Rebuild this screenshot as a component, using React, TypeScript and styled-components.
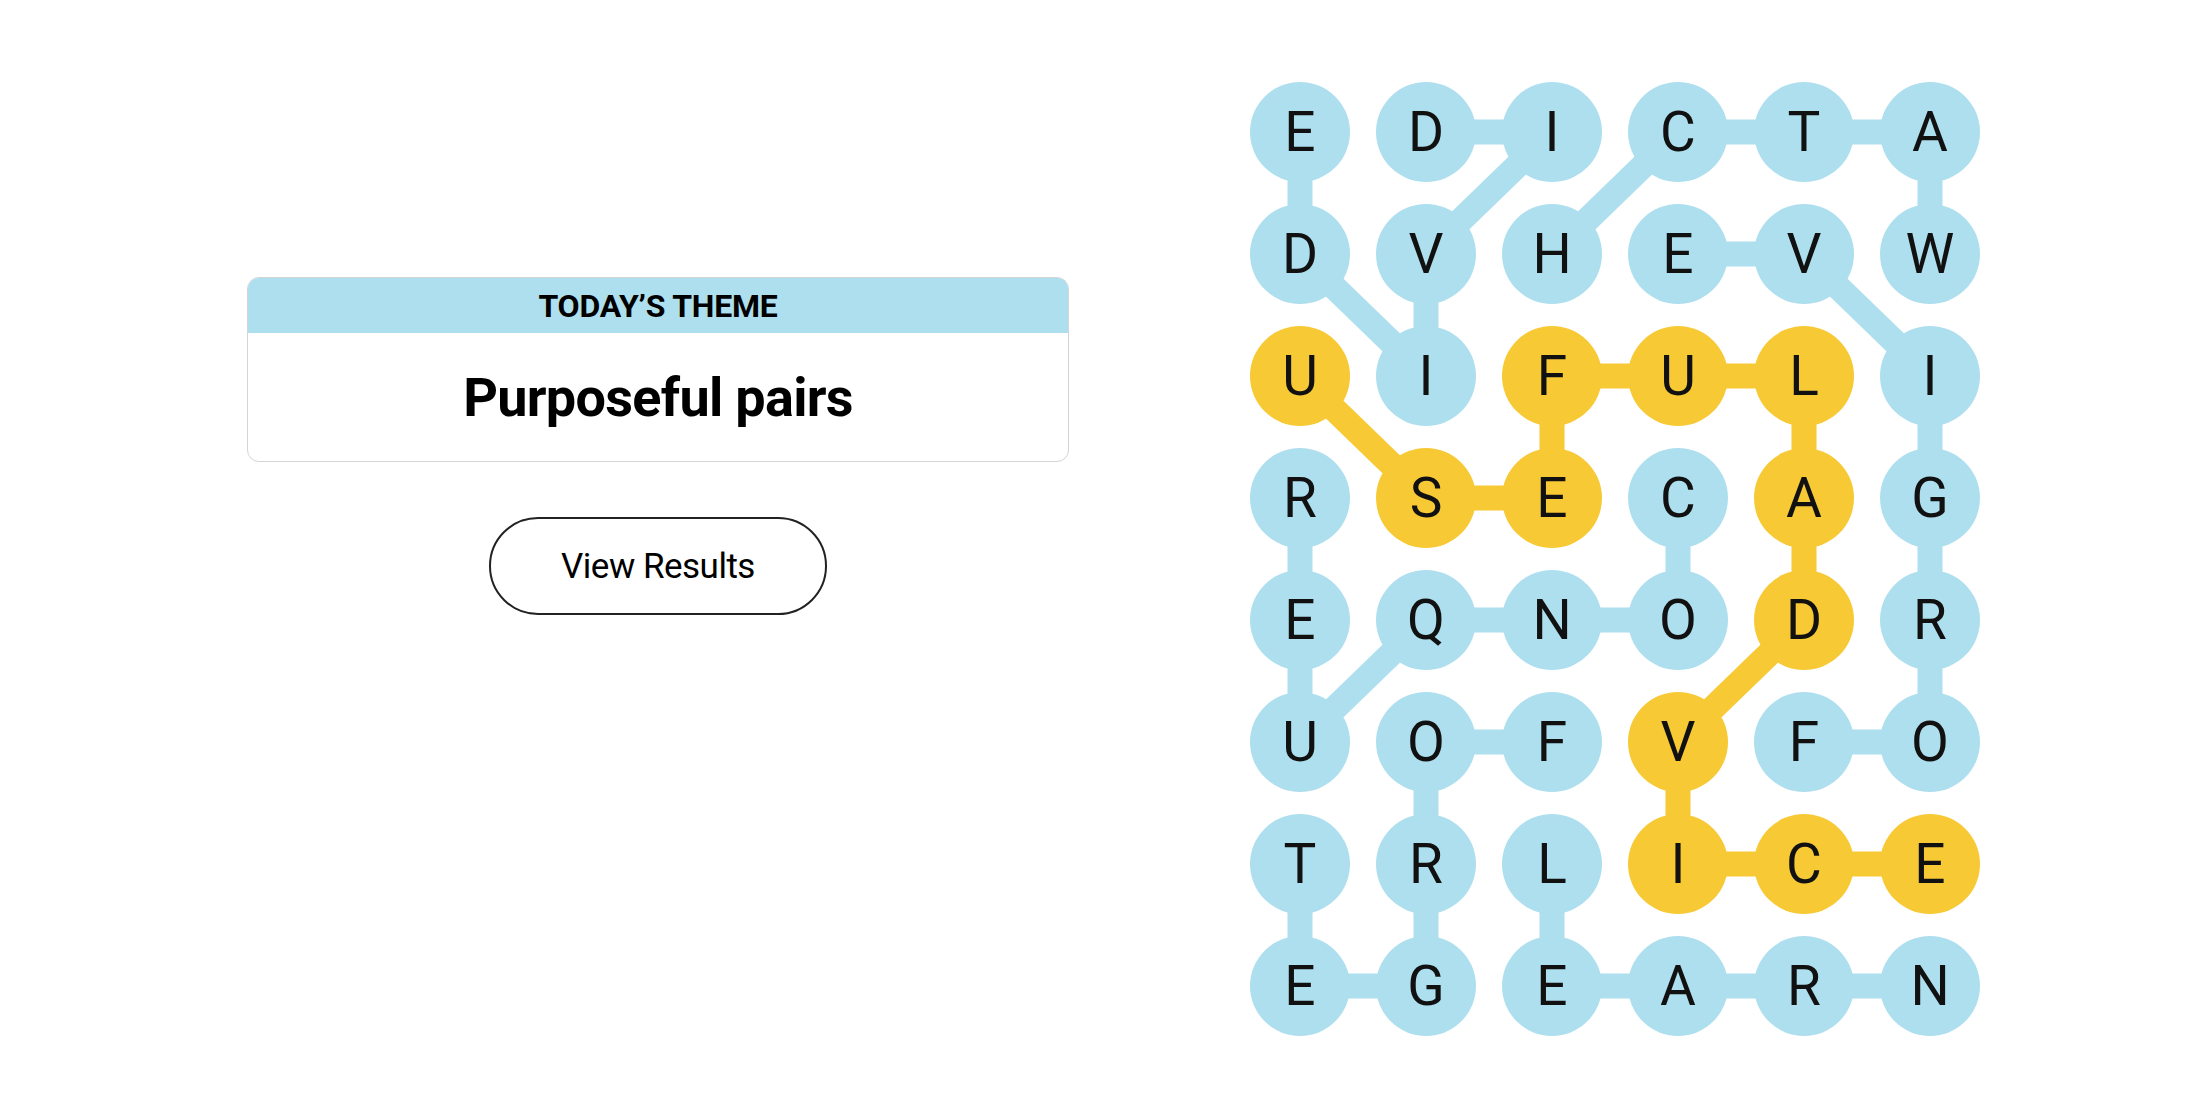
import React from 'react'
import styled, { createGlobalStyle } from 'styled-components'

const BLUE = '#aedfee'
const YELLOW = '#f7c935'
const CELL = 100
const COL_STEP = 126
const ROW_STEP = 122

const GlobalStyle = createGlobalStyle`
  body {
    margin: 0;
    background: #ffffff;
    font-family: Roboto, "Liberation Sans", sans-serif;
    color: #000;
  }
`

const Page = styled.div`
  display: flex;
  flex-direction: row;
  align-items: flex-start;
  gap: 181px;
  padding: 82px 0 0 247px;
  height: 1100px;
  box-sizing: border-box;
`

const SidePanel = styled.div`
  display: flex;
  flex-direction: column;
  align-items: center;
  gap: 55px;
  margin-top: 195px;
  width: 822px;
`

const ThemeCard = styled.div`
  width: 100%;
  border: 1.5px solid #d4d4d4;
  border-radius: 12px;
  overflow: hidden;
  box-sizing: border-box;
`

const ThemeHeader = styled.div`
  height: 55px;
  background: ${BLUE};
  display: flex;
  align-items: center;
  justify-content: center;
  font-weight: 700;
  font-size: 32px;
  letter-spacing: -0.2px;
`

const ThemeTitle = styled.div`
  height: 128px;
  display: flex;
  align-items: center;
  justify-content: center;
  font-weight: 700;
  font-size: 54px;
  letter-spacing: -0.7px;
`

const ResultsButton = styled.button`
  width: 338px;
  height: 98px;
  border: 2px solid #222;
  border-radius: 49px;
  background: #fff;
  font-family: Roboto, "Liberation Sans", sans-serif;
  font-size: 35px;
  color: #000;
  letter-spacing: -0.5px;
  cursor: pointer;
`

const Board = styled.div`
  position: relative;
  width: ${CELL * 6 + (COL_STEP - CELL) * 5}px;
`

const Links = styled.svg`
  position: absolute;
  left: 0;
  top: 0;
  width: 100%;
  height: 100%;
`

const LetterGrid = styled.div`
  position: relative;
  display: grid;
  grid-template-columns: repeat(6, ${CELL}px);
  grid-auto-rows: ${CELL}px;
  column-gap: ${COL_STEP - CELL}px;
  row-gap: ${ROW_STEP - CELL}px;
`

const Letter = styled.div<{ $found: boolean }>`
  width: ${CELL}px;
  height: ${CELL}px;
  border-radius: 50%;
  background: ${(p) => (p.$found ? YELLOW : BLUE)};
  display: flex;
  align-items: center;
  justify-content: center;
  font-size: 55px;
  font-weight: 400;
  color: #111;
`

const rows = ['EDICTA', 'DVHEVW', 'UIFULI', 'RSECAG', 'EQNODR', 'UOFVFO', 'TRLICE', 'EGEARN']

type P = [number, number]

const blueWords: P[][] = [
  [[0, 1], [0, 2], [1, 1], [2, 1], [1, 0], [0, 0]],
  [[1, 5], [0, 5], [0, 4], [0, 3], [1, 2]],
  [[5, 4], [5, 5], [4, 5], [3, 5], [2, 5], [1, 4], [1, 3]],
  [[3, 3], [4, 3], [4, 2], [4, 1], [5, 0], [4, 0], [3, 0]],
  [[5, 2], [5, 1], [6, 1], [7, 1], [7, 0], [6, 0]],
  [[6, 2], [7, 2], [7, 3], [7, 4], [7, 5]],
]

const spangram: P[] = [
  [2, 0], [3, 1], [3, 2], [2, 2], [2, 3], [2, 4], [3, 4], [4, 4], [5, 3], [6, 3], [6, 4], [6, 5],
]

const spanSet = new Set(spangram.map(([r, c]) => `${r}-${c}`))

const cx = (c: number) => c * COL_STEP + CELL / 2
const cy = (r: number) => r * ROW_STEP + CELL / 2

function WordPath({ path, color }: { path: P[]; color: string }) {
  return (
    <>
      {path.slice(1).map(([r, c], i) => {
        const [pr, pc] = path[i]
        return (
          <line
            key={i}
            x1={cx(pc)}
            y1={cy(pr)}
            x2={cx(c)}
            y2={cy(r)}
            stroke={color}
            strokeWidth={25}
          />
        )
      })}
    </>
  )
}

export default function App() {
  return (
    <>
      <GlobalStyle />
      <Page>
        <SidePanel>
          <ThemeCard>
            <ThemeHeader>TODAY’S THEME</ThemeHeader>
            <ThemeTitle>Purposeful pairs</ThemeTitle>
          </ThemeCard>
          <ResultsButton>View Results</ResultsButton>
        </SidePanel>
        <Board>
          <Links>
            {blueWords.map((w, i) => (
              <WordPath key={i} path={w} color={BLUE} />
            ))}
            <WordPath path={spangram} color={YELLOW} />
          </Links>
          <LetterGrid>
            {rows.map((row, r) =>
              row.split('').map((ch, c) => (
                <Letter key={`${r}-${c}`} $found={spanSet.has(`${r}-${c}`)}>
                  {ch}
                </Letter>
              ))
            )}
          </LetterGrid>
        </Board>
      </Page>
    </>
  )
}
